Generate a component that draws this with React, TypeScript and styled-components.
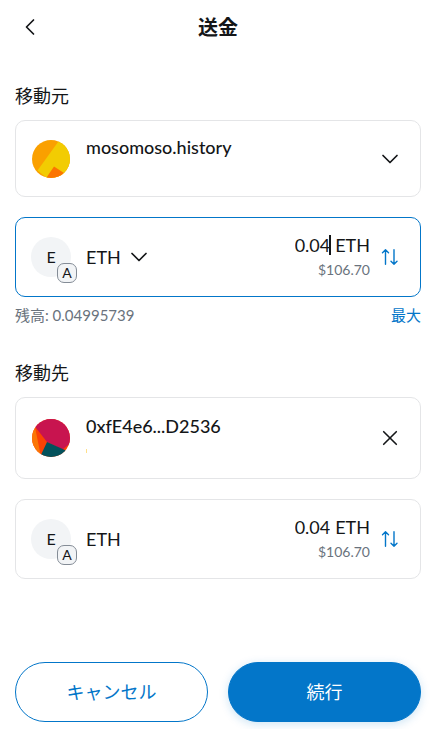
import React, { useState } from "react";
import styled, { createGlobalStyle } from "styled-components";

const colors = {
  text: "#141618",
  muted: "#6a737d",
  border: "#e4e5e7",
  primary: "#0376c9",
  soft: "#f2f4f6",
};

const GlobalStyle = createGlobalStyle`
  *, *::before, *::after { box-sizing: border-box; }
  body {
    margin: 0;
    background: #fff;
    color: ${colors.text};
    font-family: Lato, "Noto Sans CJK JP", sans-serif;
    font-size: 18px;
    line-height: 26px;
  }
  button, input { font: inherit; color: inherit; }
`;

const Page = styled.main`
  display: flex;
  flex-direction: column;
  padding: 12px 20px 7px 15px;
`;

const Header = styled.header`
  display: grid;
  grid-template-columns: 30px 1fr 30px;
  align-items: center;
  height: 30px;
  margin-bottom: 41px;
`;

const Title = styled.h1`
  margin: 0;
  font-size: 20px;
  font-weight: 700;
  line-height: 30px;
  text-align: center;
`;

const IconButton = styled.button<{ $tone?: string }>`
  display: flex;
  align-items: center;
  justify-content: center;
  flex: none;
  width: 20px;
  height: 20px;
  padding: 0;
  border: 0;
  background: none;
  color: ${({ $tone }) => $tone ?? colors.text};
  cursor: pointer;
`;

const BackButton = styled(IconButton)`
  width: 30px;
  height: 30px;
`;

const Section = styled.section`
  display: flex;
  flex-direction: column;
`;

const SectionTitle = styled.h2`
  margin: 0 0 11px;
  font-size: 18px;
  font-weight: 400;
  line-height: 26px;
`;

const Card = styled.div<{ $active?: boolean }>`
  display: flex;
  align-items: center;
  gap: 15px;
  min-height: 80px;
  padding: 12px 20px 12px 15px;
  border: 1px solid ${({ $active }) => ($active ? colors.primary : colors.border)};
  border-radius: 10px;
`;

const AccountCard = styled(Card)<{ $tall?: boolean }>`
  min-height: ${({ $tall }) => ($tall ? 82 : 77)}px;
  margin-bottom: 20px;
`;

const Avatar = styled.svg`
  flex: none;
  width: 40px;
  height: 40px;
  padding: 1px;
`;

const AccountText = styled.div`
  display: flex;
  flex: 1;
  flex-direction: column;
  min-width: 0;
`;

const AccountName = styled.span`
  font-weight: 500;
  line-height: 26px;
`;

const AccountNote = styled.span`
  display: flex;
  align-items: center;
  height: 24px;
`;

const NoteMark = styled.span`
  width: 1px;
  height: 4px;
  background: #ffe08a;
`;

const TokenIcon = styled.div`
  position: relative;
  display: flex;
  align-items: center;
  justify-content: center;
  flex: none;
  width: 40px;
  height: 40px;
  border-radius: 50%;
  background: ${colors.soft};
  font-size: 16px;
`;

const NetworkBadge = styled.span`
  position: absolute;
  right: -6px;
  bottom: -6px;
  display: flex;
  align-items: center;
  justify-content: center;
  width: 20px;
  height: 20px;
  border: 1px solid #848c96;
  border-radius: 7px;
  background: ${colors.soft};
  font-size: 14px;
  line-height: 18px;
`;

const TokenName = styled.div`
  display: flex;
  align-items: center;
  gap: 8px;
  flex: 1;
`;

const Amounts = styled.div`
  display: flex;
  flex-direction: column;
  align-items: flex-end;
`;

const AmountLine = styled.label`
  display: flex;
  gap: 5px;
  line-height: 26px;
`;

const InputWrap = styled.span`
  position: relative;
  display: flex;
`;

const AmountInput = styled.input`
  field-sizing: content;
  height: 26px;
  padding: 0;
  border: 0;
  outline: 0;
  background: none;
  text-align: right;
`;

const Caret = styled.span`
  position: absolute;
  top: 3px;
  right: -1px;
  width: 2px;
  height: 20px;
  background: ${colors.text};
`;

const Fiat = styled.span`
  color: ${colors.muted};
  font-size: 14px;
  line-height: 24px;
`;

const AmountGroup = styled.div`
  display: flex;
  align-items: center;
  gap: 10px;
`;

const BalanceRow = styled.div`
  display: flex;
  justify-content: space-between;
  align-items: center;
  margin: 6px 0 33px;
  color: ${colors.muted};
  font-size: 15px;
  line-height: 24px;
`;

const MaxButton = styled.button`
  padding: 0;
  border: 0;
  background: none;
  color: ${colors.primary};
  cursor: pointer;
`;

const Footer = styled.footer`
  display: grid;
  grid-template-columns: 1fr 1fr;
  gap: 20px;
  margin-top: 83px;
`;

const ActionButton = styled.button<{ $filled?: boolean }>`
  height: 60px;
  border: 1px solid ${colors.primary};
  border-radius: 30px;
  background: ${({ $filled }) => ($filled ? colors.primary : "#fff")};
  color: ${({ $filled }) => ($filled ? "#fff" : colors.primary)};
  box-shadow: ${({ $filled }) => ($filled ? "0 2px 10px rgba(3, 118, 201, 0.2)" : "none")};
  cursor: pointer;
`;

const Stroke = ({ d, width = 2 }: { d: string; width?: number }) => (
  <svg width="20" height="20" viewBox="0 0 20 20" fill="none" stroke="currentColor" strokeWidth={width} strokeLinecap="round" strokeLinejoin="round" aria-hidden="true">
    <path d={d} />
  </svg>
);

const ChevronDown = () => <Stroke d="M3 6.5 L10 13.5 L17 6.5" width={1.7} />;
const ChevronLeft = () => <Stroke d="M13.5 3 L6.5 10 L13.5 17" width={1.7} />;
const Close = () => <Stroke d="M3.7 3.7 L16.3 16.3 M16.3 3.7 L3.7 16.3" width={1.6} />;
const Swap = () => (
  <Stroke d="M5.500 17.3 V2.8 M2.500 5.800 L5.500 2.8 L8.500 5.800 M14 2.8 V17.3 M11 14.3 L14 17.3 L17 14.3" width={1.4} />
);

function Token({ id, value, onChange, active }: { id: string; value: string; onChange: (v: string) => void; active?: boolean }) {
  return (
    <Card $active={active}>
      <TokenIcon>
        E<NetworkBadge>A</NetworkBadge>
      </TokenIcon>
      <TokenName>
        ETH
        {active && (
          <IconButton type="button" aria-label="ETH">
            <ChevronDown />
          </IconButton>
        )}
      </TokenName>
      <AmountGroup>
        <Amounts>
          <AmountLine htmlFor={id}>
            <InputWrap>
              <AmountInput id={id} inputMode="decimal" size={4} value={value} onChange={(e) => onChange(e.target.value)} />
              {active && <Caret />}
            </InputWrap>
            <span>ETH</span>
          </AmountLine>
          <Fiat>$106.70</Fiat>
        </Amounts>
        <IconButton type="button" $tone={colors.primary} aria-label="ETH / USD">
          <Swap />
        </IconButton>
      </AmountGroup>
    </Card>
  );
}

export default function App() {
  const [amount, setAmount] = useState("0.04");
  return (
    <>
      <GlobalStyle />
      <Page>
        <Header>
          <BackButton type="button" aria-label="戻る">
            <ChevronLeft />
          </BackButton>
          <Title>送金</Title>
        </Header>

        <Section>
          <SectionTitle>移動元</SectionTitle>
          <AccountCard>
            <Avatar viewBox="0 0 38 38" aria-hidden="true">
              <clipPath id="from-clip"><circle cx="19" cy="19" r="19" /></clipPath>
              <g clipPath="url(#from-clip)">
                <path fill="#faa000" d="M0 0H38V38H0Z" />
                <path fill="#f2cc02" d="M27.5 0 L5.5 30.5 L16 39 L38 38 V0Z" />
                <path fill="#fc7500" d="M22 26.5 L32 33 L30 39 H13.500Z" />
              </g>
            </Avatar>
            <AccountText>
              <AccountName>mosomoso.history</AccountName>
              <AccountNote />
            </AccountText>
            <IconButton type="button" aria-label="mosomoso.history">
              <ChevronDown />
            </IconButton>
          </AccountCard>
          <Token id="send-amount" value={amount} onChange={setAmount} active />
          <BalanceRow>
            <span>残高: 0.04995739</span>
            <MaxButton type="button">最大</MaxButton>
          </BalanceRow>
        </Section>

        <Section>
          <SectionTitle>移動先</SectionTitle>
          <AccountCard $tall>
            <Avatar viewBox="0 0 38 38" aria-hidden="true">
              <clipPath id="to-clip"><circle cx="19" cy="19" r="19" /></clipPath>
              <g clipPath="url(#to-clip)">
                <path fill="#fb4205" d="M0 0H38V38H0Z" />
                <path fill="#fb7605" d="M0 0 L3 8 L9 38 H0Z" />
                <path fill="#c8144f" d="M2.500 7 L15 23 L30.500 30.500 L38 24.500 V0 H0Z" />
                <path fill="#04525c" d="M15 23 L34 31.500 L30 38 H8Z" />
              </g>
            </Avatar>
            <AccountText>
              <AccountName>0xfE4e6...D2536</AccountName>
              <AccountNote>
                <NoteMark />
              </AccountNote>
            </AccountText>
            <IconButton type="button" aria-label="クリア">
              <Close />
            </IconButton>
          </AccountCard>
          <Token id="receive-amount" value={amount} onChange={setAmount} />
        </Section>

        <Footer>
          <ActionButton type="button">キャンセル</ActionButton>
          <ActionButton type="button" $filled>続行</ActionButton>
        </Footer>
      </Page>
    </>
  );
}
